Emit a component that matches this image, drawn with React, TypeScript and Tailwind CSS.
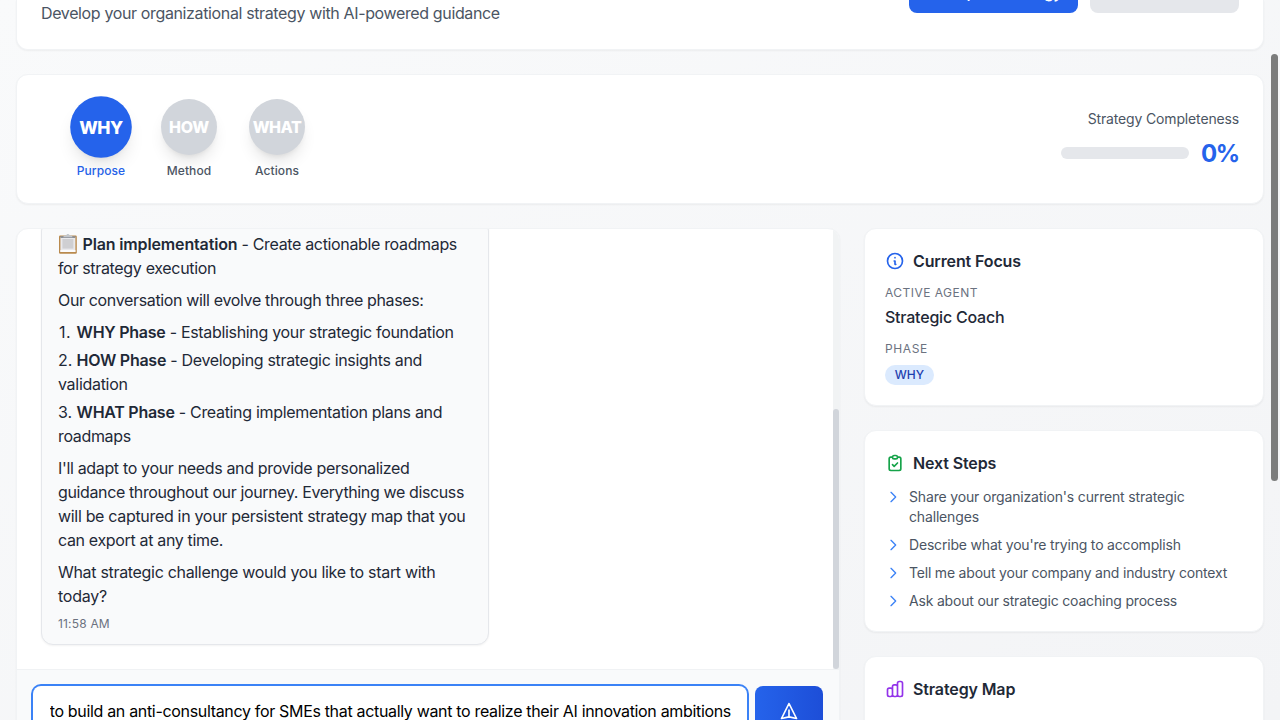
import type { ReactNode } from "react";

function Icon({ d, className, strokeWidth = 2 }: { d: string; className: string; strokeWidth?: number }) {
  return (
    <svg
      className={className}
      fill="none"
      stroke="currentColor"
      strokeWidth={strokeWidth}
      strokeLinecap="round"
      strokeLinejoin="round"
      viewBox="0 0 24 24"
    >
      <path d={d} />
    </svg>
  );
}

const ICONS = {
  info: "M13 16h-1v-4h-1m1-4h.01M21 12a9 9 0 11-18 0 9 9 0 0118 0z",
  clipboard:
    "M9 5H7a2 2 0 00-2 2v12a2 2 0 002 2h10a2 2 0 002-2V7a2 2 0 00-2-2h-2M9 5a2 2 0 002 2h2a2 2 0 002-2M9 5a2 2 0 012-2h2a2 2 0 012 2m-6 9l2 2 4-4",
  chart:
    "M9 19v-6a2 2 0 00-2-2H5a2 2 0 00-2 2v6a2 2 0 002 2h2a2 2 0 002-2zm0 0V9a2 2 0 012-2h2a2 2 0 012 2v10m-6 0a2 2 0 002 2h2a2 2 0 002-2m0 0V5a2 2 0 012-2h2a2 2 0 012 2v14a2 2 0 01-2 2h-2a2 2 0 01-2-2z",
  chevron: "M9 5l7 7-7 7",
  send: "M12 19l9 2-9-18-9 18 9-2zm0 0v-8",
  download: "M12 4v11m0 0l-4-4m4 4l4-4M5 20h14",
};

function ClipboardEmoji() {
  return (
    <svg className="mr-[4.5px] inline-block h-5 w-5 align-[-4px]" viewBox="0 0 20 20">
      <rect x="1" y="1.6" width="17.8" height="18.2" rx="1.2" fill="#b98a4e" />
      <rect x="2.4" y="3" width="15" height="15" fill="#e9e9ec" />
      <rect x="4.4" y="5" width="11" height="9.6" fill="#cfcfd2" />
      <rect x="2.4" y="16" width="15" height="2" fill="#fbfbfc" />
      <rect x="2.4" y="2.2" width="15" height="1.8" fill="#8d9198" />
      <path d="M5.2 3.2 6 1.6h2.2C8.500 .6 9 .1 9.900 .1s1.400 .5 1.700 1.500h2.200l.8 1.600z" fill="#c3c7cc" />
    </svg>
  );
}

function Card({ className, children }: { className: string; children?: ReactNode }) {
  return (
    <div className={`rounded-xl border border-[#f1f3f5] bg-white shadow-[0_1px_2px_rgba(0,0,0,0.05)] ${className}`}>
      {children}
    </div>
  );
}

function Phase({
  name,
  label,
  active,
  tracking,
}: {
  name: string;
  label: string;
  active?: boolean;
  tracking: string;
}) {
  return (
    <div className="flex w-14 flex-col items-center">
      <div
        className={`flex h-14 w-14 items-center justify-center rounded-full font-extrabold text-white shadow-[0_10px_15px_-3px_rgba(0,0,0,0.1),0_4px_6px_-4px_rgba(0,0,0,0.1)] ${tracking} ${
          active ? "scale-110 bg-[#2563eb]" : "bg-[#d1d5db]"
        }`}
      >
        {name}
      </div>
      <span
        className={`mt-2 text-xs font-medium tracking-[0.007em] ${active ? "text-[#2563eb]" : "text-[#4b5563]"}`}
      >
        {label}
      </span>
    </div>
  );
}

function CardTitle({ icon, color, children }: { icon: string; color: string; children: ReactNode }) {
  return (
    <h3 className="mb-3 flex items-center text-base font-semibold tracking-[-0.008em] text-[#1f2937]">
      <Icon d={icon} className={`mr-2 h-5 w-5 ${color}`} />
      {children}
    </h3>
  );
}

const STEPS: { lines: string[]; tracking: string }[] = [
  { lines: ["Share your organization's current strategic", "challenges"], tracking: "tracking-[-0.0115em]" },
  { lines: ["Describe what you're trying to accomplish"], tracking: "tracking-[-0.0132em]" },
  { lines: ["Tell me about your company and industry context"], tracking: "tracking-[-0.014em]" },
  { lines: ["Ask about our strategic coaching process"], tracking: "tracking-[-0.0135em]" },
];

function Line({ children, className = "tracking-[-0.021em]" }: { children: ReactNode; className?: string }) {
  return <span className={`block ${className}`}>{children}</span>;
}

function PhaseItem({ n, name, rest, tail }: { n: number; name: string; rest: ReactNode; tail?: ReactNode }) {
  return (
    <li>
      <span className="block">
        <span className={`inline-block w-[18.6px] ${n === 1 ? "pl-px tracking-[0.03em]" : "tracking-normal"}`}>{n}.</span>
        <strong className="font-semibold tracking-[-0.0165em]">{name}</strong> {rest}
      </span>
      {tail}
    </li>
  );
}

function ChatMessage() {
  return (
    <div className="w-[448px] rounded-xl border border-[#e5e7eb] bg-[#f9fafb] px-4 py-3 whitespace-nowrap text-[#1f2937] shadow-[0_1px_2px_rgba(0,0,0,0.05)]">
      <p className="mb-2 tracking-[-0.0215em]">
        <ClipboardEmoji />
        <strong className="font-semibold tracking-[-0.009em]">Plan implementation</strong> - Create actionable roadmaps
        <Line className="tracking-[-0.0207em]">for strategy execution</Line>
      </p>
      <p className="mb-2 tracking-[-0.022em]">Our conversation will evolve through three phases:</p>
      <ol className="mb-2 space-y-1 tracking-[-0.02em]">
        <PhaseItem n={1} name="WHY Phase" rest="- Establishing your strategic foundation" />
        <PhaseItem
          n={2}
          name="HOW Phase"
          rest="- Developing strategic insights and"
          tail={<Line className="tracking-[-0.0185em]">validation</Line>}
        />
        <PhaseItem
          n={3}
          name="WHAT Phase"
          rest="- Creating implementation plans and"
          tail={<Line>roadmaps</Line>}
        />
      </ol>
      <p className="mb-2">
        <Line className="tracking-[-0.0212em]">I'll adapt to your needs and provide personalized</Line>
        <Line className="tracking-[-0.0235em]">guidance throughout our journey. Everything we discuss</Line>
        <Line className="tracking-[-0.0198em]">will be captured in your persistent strategy map that you</Line>
        <Line className="tracking-[-0.0215em]">can export at any time.</Line>
      </p>
      <p>
        <Line className="tracking-[-0.0196em]">What strategic challenge would you like to start with</Line>
        <Line className="tracking-[-0.0165em]">today?</Line>
      </p>
      <div className="mt-2 text-xs tracking-[0.015em] text-[#6b7280]">11:58 AM</div>
    </div>
  );
}

export default function App() {
  return (
    <div className="relative h-[720px] w-[1280px] overflow-hidden bg-linear-to-br from-[#f9fafb] to-[#f3f4f6] px-4 font-['Inter','Noto_Sans',sans-serif] text-base">
      <Card className="flex h-[50px] items-end justify-between rounded-t-none border-t-0 px-6">
        <p className="pb-6 tracking-[-0.0229em] whitespace-nowrap text-[#4b5563]">
          Develop your organizational strategy with AI-powered guidance
        </p>
        <div className="flex gap-3 pb-9">
          <button className="flex h-10 w-[169px] items-center justify-center rounded-lg bg-[#2563eb] pb-0.5 font-medium tracking-[-0.024em] whitespace-nowrap text-white">
            <Icon d={ICONS.download} className="mr-2 h-4 w-4" />
            Export Strategy
          </button>
          <button className="h-10 w-[149px] rounded-lg bg-[#e5e7eb]" />
        </div>
      </Card>

      <Card className="mt-6 flex h-[130px] items-center justify-between p-6">
        <div className="flex gap-8 pl-8">
          <Phase name="WHY" label="Purpose" active tracking="tracking-[-0.025em]" />
          <Phase name="HOW" label="Method" tracking="tracking-[-0.015em]" />
          <Phase name="WHAT" label="Actions" tracking="tracking-[-0.03em]" />
        </div>
        <div className="flex flex-col items-end">
          <div className="text-sm tracking-[-0.011em] text-[#4b5563]">Strategy Completeness</div>
          <div className="mt-2 flex items-center gap-3">
            <div className="h-3 w-32 rounded-full bg-[#e5e7eb]" />
            <span className="w-[38px] pt-0.5 text-2xl leading-[30px] font-bold tracking-[-0.055em] text-[#2563eb]">0%</span>
          </div>
        </div>
      </Card>

      <div className="mt-6 grid grid-cols-[824px_400px] items-start gap-6">
        <Card className="h-[540px] overflow-hidden">
          <div className="flex h-[440px]">
            <div className="flex h-full flex-1 flex-col justify-end overflow-hidden px-6 pb-6">
              <ChatMessage />
            </div>
            <div className="flex w-1.5 flex-col justify-end bg-[#f1f3f4]">
              <div className="h-[260px] rounded-[3px] bg-[#d1d5db]" />
            </div>
          </div>
          <div className="flex gap-2 border-t border-[#f0f2f4] bg-[#f9fafb] p-4 pr-[15px] pb-12">
            <div className="flex h-[50px] w-[714px] items-center justify-end overflow-hidden rounded-lg bg-white pr-4 ring-2 ring-[#3b82f6]">
              <span className="flex w-[681px] justify-end overflow-hidden tracking-[-0.0204em] whitespace-nowrap text-black">
                to build an anti-consultancy for SMEs that actually want to realize their AI innovation ambitions
              </span>
            </div>
            <button className="flex h-[50px] w-[68px] items-center justify-center rounded-lg bg-linear-to-r from-[#2563eb] to-[#1d4ed8] text-white">
              <Icon d={ICONS.send} className="h-5 w-5" />
            </button>
          </div>
        </Card>

        <div className="flex flex-col gap-6">
          <Card className="p-5">
            <CardTitle icon={ICONS.info} color="text-[#2563eb]">
              Current Focus
            </CardTitle>
            <div className="text-xs tracking-[0.039em] text-[#6b7280]">ACTIVE AGENT</div>
            <div className="mt-1 font-medium tracking-[-0.0135em] text-[#1f2937]">Strategic Coach</div>
            <div className="mt-3 text-xs tracking-[0.05em] text-[#6b7280]">PHASE</div>
            <div className="mt-2 flex">
              <span className="flex h-5 w-[49px] items-center justify-center rounded-full bg-[#dbeafe] text-xs font-medium text-[#1e40af]">
                WHY
              </span>
            </div>
          </Card>

          <Card className="p-5">
            <CardTitle icon={ICONS.clipboard} color="text-[#16a34a]">
              Next Steps
            </CardTitle>
            <ul className="space-y-2 text-sm text-[#4b5563]">
              {STEPS.map((step) => (
                <li key={step.lines[0]} className={`flex items-start whitespace-nowrap ${step.tracking}`}>
                  <Icon d={ICONS.chevron} className="mt-0.5 mr-2 h-4 w-4 text-[#3b82f6]" />
                  <span>
                    {step.lines.map((line) => (
                      <span key={line} className="block">
                        {line}
                      </span>
                    ))}
                  </span>
                </li>
              ))}
            </ul>
          </Card>

          <Card className="h-40 p-5">
            <CardTitle icon={ICONS.chart} color="text-[#9333ea]">
              Strategy Map
            </CardTitle>
          </Card>
        </div>
      </div>

      <div className="absolute top-[54px] left-[1271px] h-[427px] w-[7px] rounded-full bg-[#7b7c7c]" />
    </div>
  );
}
